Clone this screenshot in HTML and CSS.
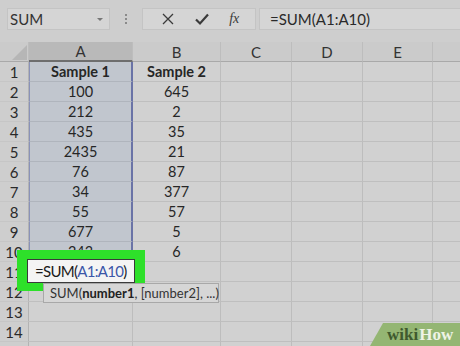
FILE: index.html
```html
<!DOCTYPE html>
<html>
<head>
<meta charset="utf-8">
<link rel="stylesheet" href="styles.css">
</head>
<body>
<div class="app">
  <div class="toolbar">
    <div class="namebox"><span>SUM</span><span class="caret"></span></div>
    <div class="grip"><i></i><i></i><i></i></div>
    <div class="btns">
      <svg class="ico" width="14" height="14" viewBox="0 0 14 14"><path d="M2 2 L12 12 M12 2 L2 12" stroke="#3a3a3a" stroke-width="1.3" fill="none"/></svg>
      <svg class="ico" width="16" height="14" viewBox="0 0 16 14"><path d="M2 7.5 L6 11.5 L14 2.5" stroke="#3a3a3a" stroke-width="2.2" fill="none"/></svg>
      <span class="fx">fx</span>
    </div>
    <div class="formula">=SUM(A1:A10)</div>
  </div>
  <div class="sheet">
    <div class="corner"><span class="tri"></span></div>
    <div class="ch sel">A</div><div class="ch">B</div><div class="ch">C</div><div class="ch">D</div><div class="ch">E</div><div class="ch last"></div>

    <div class="rh">1</div><div class="c a b">Sample 1</div><div class="c b">Sample 2</div><div class="c"></div><div class="c"></div><div class="c"></div><div class="c last"></div>
    <div class="rh">2</div><div class="c a">100</div><div class="c">645</div><div class="c"></div><div class="c"></div><div class="c"></div><div class="c last"></div>
    <div class="rh">3</div><div class="c a">212</div><div class="c">2</div><div class="c"></div><div class="c"></div><div class="c"></div><div class="c last"></div>
    <div class="rh">4</div><div class="c a">435</div><div class="c">35</div><div class="c"></div><div class="c"></div><div class="c"></div><div class="c last"></div>
    <div class="rh">5</div><div class="c a">2435</div><div class="c">21</div><div class="c"></div><div class="c"></div><div class="c"></div><div class="c last"></div>
    <div class="rh">6</div><div class="c a">76</div><div class="c">87</div><div class="c"></div><div class="c"></div><div class="c"></div><div class="c last"></div>
    <div class="rh">7</div><div class="c a">34</div><div class="c">377</div><div class="c"></div><div class="c"></div><div class="c"></div><div class="c last"></div>
    <div class="rh">8</div><div class="c a">55</div><div class="c">57</div><div class="c"></div><div class="c"></div><div class="c"></div><div class="c last"></div>
    <div class="rh">9</div><div class="c a">677</div><div class="c">5</div><div class="c"></div><div class="c"></div><div class="c"></div><div class="c last"></div>
    <div class="rh">10</div><div class="c a">243</div><div class="c">6</div><div class="c"></div><div class="c"></div><div class="c"></div><div class="c last"></div>
    <div class="rh">11</div><div class="c"></div><div class="c"></div><div class="c"></div><div class="c"></div><div class="c"></div><div class="c last"></div>
    <div class="rh">12</div><div class="c"></div><div class="c"></div><div class="c"></div><div class="c"></div><div class="c"></div><div class="c last"></div>
    <div class="rh">13</div><div class="c"></div><div class="c"></div><div class="c"></div><div class="c"></div><div class="c"></div><div class="c last"></div>
    <div class="rh">14</div><div class="c"></div><div class="c"></div><div class="c"></div><div class="c"></div><div class="c"></div><div class="c last"></div>
    <div class="rh"></div><div class="c"></div><div class="c"></div><div class="c"></div><div class="c"></div><div class="c"></div><div class="c last"></div>
  </div>

  <div class="highlight"><div class="editor">=SUM(<span class="ref">A1:A10</span>)</div></div>
  <div class="tip">SUM(<b>number1</b>, [number2], ...)</div>
  <div class="logo"><span class="wiki">wiki</span><span class="how">How</span></div>
</div>
</body>
</html>
```
FILE: styles.css
```css
* { box-sizing: border-box; }
html, body { margin: 0; padding: 0; }
body {
  width: 460px; height: 346px; overflow: hidden;
  background: #cfcfcf;
  font-family: "Lato", "Open Sans", "Liberation Sans", sans-serif;
  color: #262626;
}
.app { position: relative; width: 460px; height: 346px; overflow: hidden; }

.toolbar {
  height: 42px;
  display: flex;
  align-items: flex-start;
  padding: 8px 0 0 7px;
  background: #cecece;
}
.namebox {
  width: 103px; height: 22px;
  background: #d5d5d5;
  border: 1px solid #c4c4c4;
  display: flex; align-items: center; justify-content: space-between;
  padding: 0 6px 0 2px;
  font-size: 15px; color: #333;
}
.caret { width: 0; height: 0; border-left: 3px solid transparent; border-right: 3px solid transparent; border-top: 3px solid #777; }
.grip { width: 32px; height: 22px; display: flex; flex-direction: column; align-items: center; justify-content: center; gap: 2px; }
.grip i { display: block; width: 2px; height: 2px; background: #8a8a8a; }
.btns {
  width: 114px; height: 22px;
  background: #d5d5d5;
  border: 1px solid #c4c4c4;
  display: flex; align-items: center; justify-content: space-around;
  padding: 0 6px 0 8px;
}
.fx { font-family: "Liberation Serif", serif; font-style: italic; font-size: 14px; color: #3a3a3a; }
.formula {
  margin-left: 3px;
  flex: 1; height: 22px;
  background: #d5d5d5;
  border: 1px solid #c4c4c4;
  border-right: none;
  padding-left: 10px;
  font-size: 15px; line-height: 20px; color: #2a2a2a;
}

.sheet {
  display: grid;
  grid-template-columns: 29px 104px 88px 71px 71px 70px 27px;
  grid-template-rows: 20px repeat(15, 20px);
  font-size: 14.5px;
}
.corner { position: relative; background: #cbcbcb; border-bottom: 1px solid #a9a9a9; border-right: 1px solid #bdbdbd; }
.tri { position: absolute; right: 1px; bottom: 1px; width: 0; height: 0; border-left: 15px solid transparent; border-bottom: 15px solid #b6b6b6; }
.ch {
  background: #cbcbcb;
  border-right: 1px solid #bdbdbd;
  border-bottom: 1px solid #a9a9a9;
  display: flex; align-items: center; justify-content: center;
  font-size: 15px; color: #333;
}
.ch.sel { background: #b9b9b9; border-bottom: 2px solid #6e6e6e; }
.ch.last, .c.last { border-right: none; }
.rh {
  border-right: 1px solid #b3b3b3;
  border-bottom: 1px solid #c6c6c6;
  display: flex; align-items: center; justify-content: center;
  font-size: 15px; color: #2a2a2a;
  background: #cecece;
}
.c {
  background: #d1d1d1;
  border-right: 1px solid #bdbdbd;
  border-bottom: 1px solid #bfbfbf;
  display: flex; align-items: center; justify-content: center;
  color: #262626;
}
.c.a { background: #c1c6ce; border-right: 2px solid #6a73a6; border-left: 1px solid #8a92b8; border-bottom-color: #b0b5bd; }
.c.b { font-weight: bold; }

.highlight {
  position: absolute; left: 17px; top: 250px;
  width: 128px; height: 41px;
  background: #2ee02a;
  padding: 9px 10px 0 10px;
}
.editor {
  height: 24px;
  background: #f4f4f4;
  border: 1px solid #3a3a3a;
  font-size: 15px; line-height: 22px;
  letter-spacing: -0.7px;
  padding-left: 7px;
  color: #1a1a1a;
  white-space: nowrap;
}
.ref { color: #3b56a8; }

.tip {
  position: absolute; left: 43px; top: 283px;
  width: 176px; height: 20px;
  background: #d6d6d6;
  border: 1px solid #a8a8a8;
  font-size: 13px; line-height: 18px;
  padding-left: 6px; color: #333;
  white-space: nowrap;
}
.tip b { color: #222; }

.logo {
  position: absolute; left: 370px; top: 323px;
  width: 90px; height: 23px;
  background: #94b673;
  clip-path: polygon(13px 0, 100% 0, 100% 100%, 0 100%);
  font-family: "Liberation Serif", serif;
  font-weight: bold; font-size: 17px; line-height: 24px;
  padding-left: 17px;
  white-space: nowrap;
}
.wiki { color: #3f5a2e; }
.how { color: #eef3e6; margin-left: 1px; }
```
